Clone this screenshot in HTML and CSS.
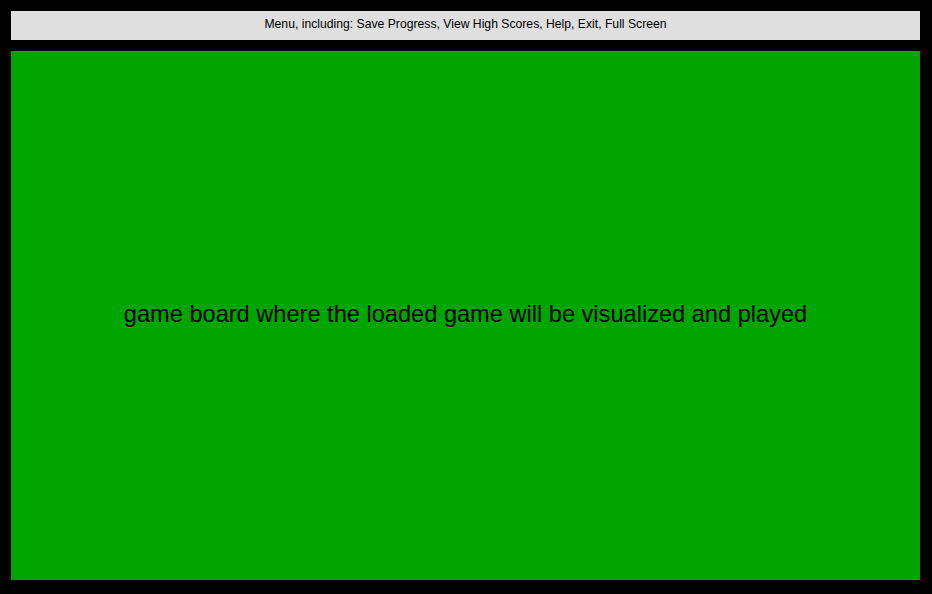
FILE: index.html
```html
<!DOCTYPE html>
<html>
<head>
<meta charset="utf-8">
<link rel="stylesheet" href="styles.css">
</head>
<body>
<div class="app">
  <div class="menu">Menu, including: Save Progress, View High Scores, Help, Exit, Full Screen</div>
  <div class="board">game board where the loaded game will be visualized and played</div>
</div>
</body>
</html>
```
FILE: styles.css
```css
html, body {
  margin: 0;
  padding: 0;
  background: #000;
  height: 100%;
}
.app {
  box-sizing: border-box;
  height: 594px;
  width: 932px;
  padding: 11px 12px 14px 11px;
  display: flex;
  flex-direction: column;
  gap: 11px;
  font-family: "Liberation Sans", Arial, sans-serif;
}
.menu {
  box-sizing: border-box;
  height: 29px;
  padding-bottom: 4px;
  background: #dfdfdf;
  color: #000;
  font-size: 12.2px;
  display: flex;
  align-items: center;
  justify-content: center;
}
.board {
  flex: 1;
  background: #00a500;
  color: #000;
  font-size: 23.6px;
  display: flex;
  align-items: center;
  justify-content: center;
  padding-bottom: 3px;
}
```
